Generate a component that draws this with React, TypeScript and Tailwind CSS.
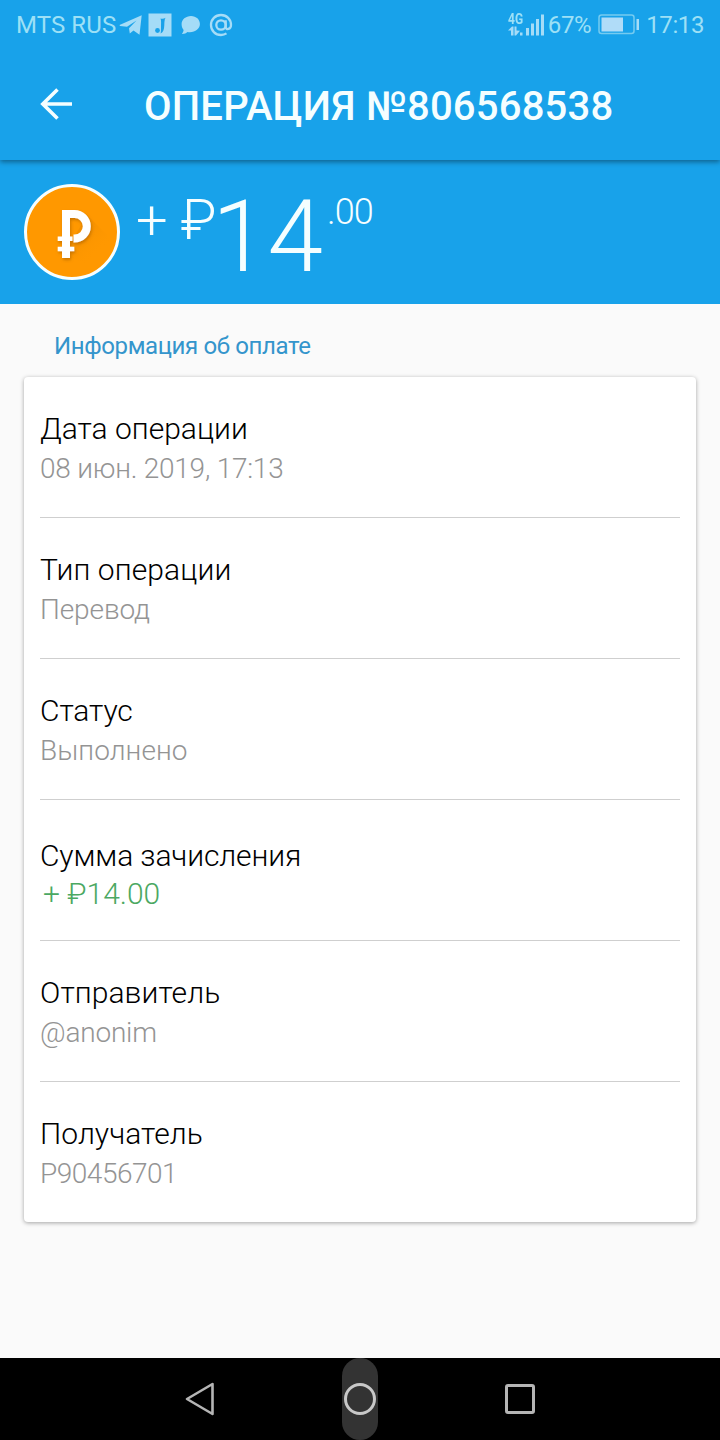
import React from 'react';
import clsx from 'clsx';

type Detail = {
  label: string;
  value: string;
  labelClass?: string;
  valueClass?: string;
  income?: boolean;
};

const details: Detail[] = [
  { label: 'Дата операции', value: '08 июн. 2019, 17:13', valueClass: 'tracking-[-0.24px]' },
  { label: 'Тип операции', value: 'Перевод', labelClass: 'tracking-[0.1px]', valueClass: 'tracking-[-0.1px]' },
  { label: 'Статус', value: 'Выполнено', labelClass: 'tracking-[-0.1px]', valueClass: 'tracking-[0.08px]' },
  { label: 'Сумма зачисления', value: '+ ₽14.00', labelClass: 'tracking-[-0.12px]', income: true },
  { label: 'Отправитель', value: '@anonim', labelClass: 'tracking-[0.08px]', valueClass: 'tracking-[-0.2px]' },
  { label: 'Получатель', value: 'P90456701', labelClass: 'tracking-[0.05px]', valueClass: 'tracking-[-0.48px]' },
];

const StatusBar: React.FC = () => (
  <div className="flex h-[50px] items-center justify-between pr-4 pl-4 text-2xl leading-[50px] text-[#9de0f6]">
    <div className="flex items-center">
      <span className="w-[103px] whitespace-nowrap tracking-[0.1px]">MTS RUS</span>
      <svg width="24" height="22" viewBox="0 0 24 22" fill="#a5dcf7">
        <path d="M.5 11 22.700 1.200 20.500 20.800 14.500 16.500 10.800 19.500 10 14.300 17.500 6.500 8 12.800 1 12Z" />
      </svg>
      <svg className="ml-[5px]" width="24" height="24" viewBox="0 0 24 24">
        <path fill="#a5dcf7" d="M.5.5h23v23H.5Z" />
        <path fill="#18a2ea" d="M12.500 5.500c1.800.5 3.600.4 5-.7-1.100 2-1.100 4.500-1.200 7.500-.1 4.500-1.300 7.400-3.800 8.200.6-1.500.5-4 .5-7 0-3 .4-6-.5-8Z" />
        <circle cx="9.500" cy="17.500" r="2.400" fill="#18a2ea" />
      </svg>
      <svg className="ml-[9px]" width="20" height="20" viewBox="0 0 20 20" fill="#a5dcf7">
        <path d="M10 1C4.800 1 .6 4.600.6 9.100c0 2.800.8 4.500 2 6-.2 1.800-1 3-1.700 3.900 2.500.1 4.200-.700 5.600-1.900 6.700 1.200 12.400-2.800 12.400-8C18.900 4.600 15.200 1 10 1Z" />
      </svg>
      <svg className="ml-[7px]" width="26" height="26" viewBox="0 0 26 26" fill="none" stroke="#a5dcf7" strokeWidth="2.300">
        <circle cx="13" cy="13" r="4.700" />
        <path d="M17.700 8.300v6.500c0 3.800 5.300 2.600 5.300-1.800C23 7.300 18.700 3 13 3S3 7.300 3 13s4.300 10 10 10c2.200 0 4-.6 5.500-1.600" />
      </svg>
    </div>
    <div className="flex items-center">
      <div className="flex w-4 flex-col items-start">
        <span className="h-3 origin-left scale-x-[0.8] text-[15px] leading-[11px] font-bold">4G</span>
        <svg width="15" height="10" viewBox="0 0 15 10" fill="#a5dcf7">
          <path d="M0 4.500 4 .5h1.500v9h-2.500V4.500ZM6.500.5h2v4l3.500.2L8 9.500H6.500ZM12 6.500h2.500v3H12Z" />
        </svg>
      </div>
      <svg className="ml-[1px]" width="20" height="22" viewBox="0 0 20 22" fill="#a5dcf7">
        <path d="M1 14h3v7.500H1ZM6 9.500h3v12H6ZM11 5h3v16.500h-3ZM16 .5h3v21h-3Z" />
      </svg>
      <span className="ml-[3px] tracking-[-0.4px]">67%</span>
      <svg className="ml-[7px]" width="42" height="22" viewBox="0 0 42 22">
        <rect x="1" y="1" width="35" height="18.500" rx="2.500" fill="none" stroke="#75cbf0" strokeWidth="1.500" />
        <path fill="#b0dcf8" d="M3.500 3.500h21.500v14H3.500Z" />
        <path fill="#a5dcf7" d="M38.500 5h2.500v11h-2.500Z" />
      </svg>
      <span className="ml-1.5 tracking-[-0.4px]">17:13</span>
    </div>
  </div>
);

const CoinIcon: React.FC = () => (
  <svg className="shrink-0" width="96" height="96" viewBox="0 0 96 96">
    <defs>
      <linearGradient id="coin-shade" x1="50" y1="40" x2="76" y2="68" gradientUnits="userSpaceOnUse">
        <stop offset="0" stopColor="#e88900" stopOpacity=".8" />
        <stop offset="1" stopColor="#ff9800" stopOpacity="0" />
      </linearGradient>
      <filter id="coin-blur" x="-50%" y="-50%" width="200%" height="200%">
        <feDropShadow dx="1" dy="2" stdDeviation="1.800" floodColor="#9a5700" floodOpacity=".5" />
      </filter>
    </defs>
    <circle cx="48" cy="48" r="46.500" fill="#ff9800" stroke="#f5feff" strokeWidth="3" />
    <path fill="url(#coin-shade)" d="M63 31 88 56 72 84 48 74 38 74Z" />
    <g fill="none" stroke="#fff" filter="url(#coin-blur)">
      <path strokeWidth="8" d="M42 74V30H50.500a12.300 12.300 0 0 1 0 24.600H49.500" />
      <path strokeWidth="4.500" d="M33.700 54.800H48.500M33.700 65H50.300" />
    </g>
  </svg>
);

const DetailRow: React.FC<Detail> = ({ label, value, labelClass, valueClass, income }) => (
  <div
    className={clsx(
      'h-[141px] border-b border-[#cfcfcf] font-light last:h-[140px] last:border-b-0',
      income ? 'pt-9' : 'pt-8',
    )}
  >
    <div className={clsx('text-[30px] leading-10 text-black', labelClass)}>{label}</div>
    {income ? (
      <div className="pl-[3px] text-[30px] leading-[36px] text-[#4ba862]">{value}</div>
    ) : (
      <div className={clsx('text-[28px] leading-10 text-[#949494]', valueClass)}>{value}</div>
    )}
  </div>
);

const NavigationBar: React.FC = () => (
  <div className="grid h-[82px] grid-cols-[280px_160px_280px] items-center bg-black">
    <svg className="ml-[184px]" width="32" height="36" viewBox="0 0 32 36" fill="none" stroke="#b5b5b5" strokeWidth="2.600" strokeLinejoin="round">
      <path d="M28.500 3v30L3 18Z" />
    </svg>
    <div className="flex h-[82px] w-9 items-center justify-center justify-self-center rounded-full bg-[#333]">
      <div className="size-8 shrink-0 rounded-full border-[3px] border-[#c8c8c8]" />
    </div>
    <div className="ml-[65px] size-[30px] rounded-[3px] border-[3px] border-[#b5b5b5]" />
  </div>
);

const App: React.FC = () => {
  return (
    <div className="flex h-[1440px] w-[720px] flex-col overflow-hidden bg-[#fafafa] font-[Roboto,sans-serif]">
      <header className="relative h-40 bg-[#18a2ea] shadow-[0_2px_5px_rgba(0,0,0,0.4)]">
        <StatusBar />
        <div className="flex h-[110px] items-center pl-10">
          <svg className="mr-[71px]" width="33" height="34" viewBox="0 0 33 34" fill="none" stroke="#f5feff" strokeWidth="3.600">
            <path d="M17.500 1.500 2.800 16 17.500 30.500M3 16h29" />
          </svg>
          <h1 className="pt-1 text-[40px] leading-[50px] font-medium tracking-[0.2px] whitespace-nowrap text-[#f5feff]">
            ОПЕРАЦИЯ №806568538
          </h1>
        </div>
      </header>

      <section className="flex h-36 items-start bg-[#18a2ea] pt-6 pl-6 font-light text-[#f5feff]">
        <CoinIcon />
        <div className="flex items-start pl-4 whitespace-nowrap">
          <span className="text-[56px] leading-[72px] tracking-[-0.4px]">+ ₽</span>
          <span className="-ml-1 text-[100px] leading-[106px]">14</span>
          <span className="ml-1 text-[36px] leading-[56px] tracking-[-0.9px]">.00</span>
        </div>
      </section>

      <main className="flex-1 px-6">
        <h2 className="h-[73px] pt-[22px] pl-[30px] text-2xl leading-10 tracking-[-0.38px] text-[#3495cc]">
          Информация об оплате
        </h2>
        <div className="rounded bg-white px-4 shadow-[0_1px_4px_rgba(0,0,0,0.35)]">
          {details.map((detail) => (
            <DetailRow key={detail.label} {...detail} />
          ))}
        </div>
      </main>

      <NavigationBar />
    </div>
  );
};

export default App;
